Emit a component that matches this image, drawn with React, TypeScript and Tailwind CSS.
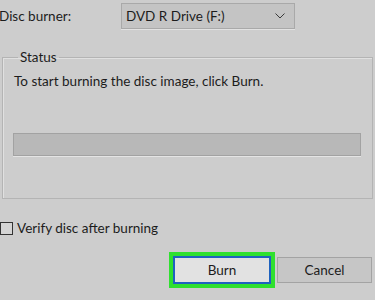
export default function App() {
  return (
    <div
      className="w-[375px] h-[300px] overflow-hidden bg-[#cdcdcd] text-[13.5px] leading-[18px] text-[#1c1c1c]"
      style={{ fontFamily: 'Lato, "Noto Sans", sans-serif' }}
    >
      <div className="mt-[3px] flex items-center">
        <span className="w-[122px] -ml-[1px]">Disc burner:</span>
        <div className="flex h-[26px] w-[174px] items-center justify-between border border-[#a9a9a9] bg-[#c4c4c4] pl-[4px] pr-[9px] shadow-[0_1px_0_#e2e2e2]">
          <span>DVD R Drive (F:)</span>
          <svg width="10" height="6" viewBox="0 0 10 6" fill="none">
            <path d="M0.5 0.5 L5 5 L9.5 0.5" stroke="#3a3a3a" strokeWidth="1" />
          </svg>
        </div>
      </div>

      <fieldset className="mx-[2px] mt-[19px] border border-[#b4b4b4] px-[11px] pb-[42px] pt-[6px] shadow-[inset_1px_1px_0_#e0e0e0]">
        <legend className="ml-[4px] px-[2px]">Status</legend>
        <p>To start burning the disc image, click Burn.</p>
        <div className="-ml-[1px] mt-[43px] h-[23px] w-[348px] border border-[#a2a2a2] bg-[#b8b8b8] shadow-[0_1px_0_#e4e4e4]" />
      </fieldset>

      <label className="mt-[20px] flex items-center">
        <span className="h-[13px] w-[13px] border border-[#333333] bg-[#d4d4d4]" />
        <span className="ml-[4px]">Verify disc after burning</span>
      </label>

      <div className="mt-[15px] flex items-center justify-end gap-[2px] pr-[3px]">
        <div className="flex h-[36px] w-[106px] border-[4px] border-[#2fe02f]">
          <button className="flex-1 border-2 border-[#1f62bf] bg-[#e2e2e2]">Burn</button>
        </div>
        <button className="h-[26px] w-[95px] border border-[#a3a3a3] bg-[#c6c6c6]">Cancel</button>
      </div>
    </div>
  )
}
